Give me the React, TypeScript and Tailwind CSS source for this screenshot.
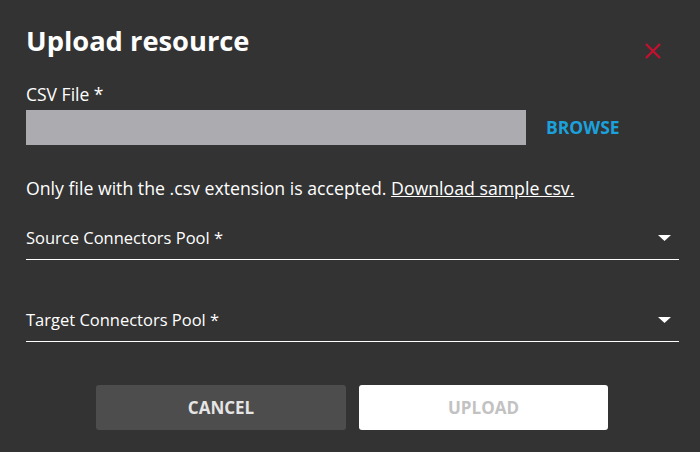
function SelectField({ label }: { label: string }) {
  return (
    <button className="flex w-[653px] items-center justify-between border-b border-white pb-[9px] text-left">
      <span className="text-[16.5px] leading-[24px] text-white">{label}</span>
      <svg width="13" height="6" viewBox="0 0 13 6" className="mr-[8px]">
        <path d="M0 0h13L6.5 6z" fill="#ffffff" />
      </svg>
    </button>
  );
}

export default function App() {
  return (
    <div
      className="h-[452px] w-[700px] bg-[#333333] px-[26px] pt-[24px] text-white"
      style={{ fontFamily: '"Open Sans", "Noto Sans", sans-serif' }}
    >
      <div className="flex h-[34px] items-start justify-between">
        <h1 className="text-[27.3px] font-bold leading-[34px]">Upload resource</h1>
        <button className="mr-[13px] mt-[19px]">
          <svg width="16" height="16" viewBox="0 0 16 16">
            <path d="M1 1L15 15M15 1L1 15" stroke="#c8102e" strokeWidth="2.2" />
          </svg>
        </button>
      </div>

      <div className="mt-[24px] text-[17.5px] leading-[24px]">CSV File *</div>
      <div className="mt-[4px] flex items-center">
        <div className="h-[35px] w-[500px] bg-[#acabb0]" />
        <button className="ml-[20px] text-[17.5px] font-bold text-[#1ba1dc]">BROWSE</button>
      </div>

      <p className="mt-[31px] text-[17.7px] leading-[24px]">
        Only file with the .csv extension is accepted.{' '}
        <a href="#" className="underline">Download sample csv.</a>
      </p>

      <div className="mt-[26px] space-y-[48px]">
        <SelectField label="Source Connectors Pool *" />
        <SelectField label="Target Connectors Pool *" />
      </div>

      <div className="mt-[43px] flex justify-center gap-[13px] pl-[4px]">
        <button className="h-[45px] w-[250px] rounded-[3px] bg-[#4d4d4d] text-[17px] font-bold text-[#e5e5e5]">
          CANCEL
        </button>
        <button className="h-[45px] w-[249px] rounded-[3px] bg-white text-[17px] font-bold text-[#c2c2c2]">
          UPLOAD
        </button>
      </div>
    </div>
  );
}
